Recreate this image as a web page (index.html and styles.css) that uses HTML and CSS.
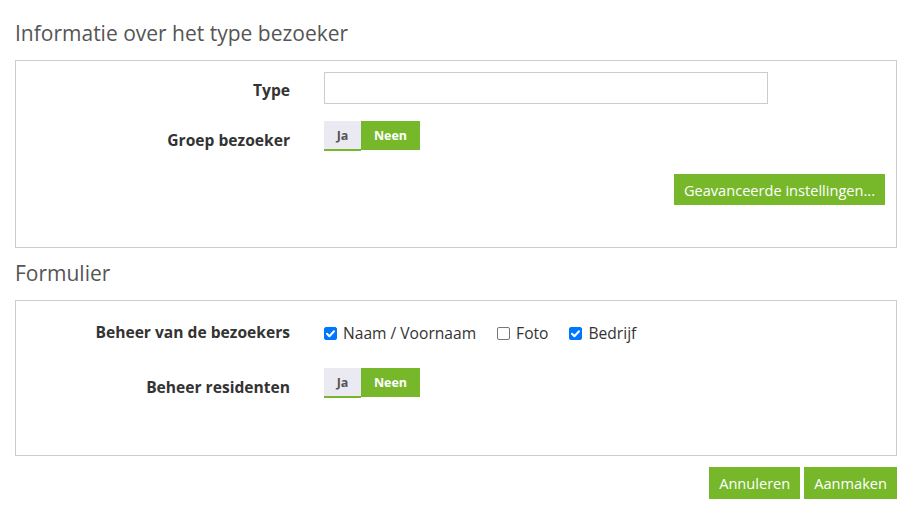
FILE: index.html
```html
<!DOCTYPE html>
<html>
<head>
<meta charset="utf-8">
<link rel="stylesheet" href="styles.css">
</head>
<body>
<div class="page">
  <h3 class="section-title">Informatie over het type bezoeker</h3>
  <div class="panel panel-info">
    <div class="row">
      <label class="label">Type</label>
      <div class="control"><input class="input" type="text"></div>
    </div>
    <div class="row">
      <label class="label label-toggle">Groep bezoeker</label>
      <div class="control">
        <div class="toggle"><span class="opt opt-off">Ja</span><span class="opt opt-on">Neen</span></div>
      </div>
    </div>
    <div class="actions-inner">
      <button class="btn">Geavanceerde instellingen...</button>
    </div>
  </div>

  <h3 class="section-title section-title-2">Formulier</h3>
  <div class="panel panel-form">
    <div class="row">
      <label class="label label-check">Beheer van de bezoekers</label>
      <div class="control checks">
        <label class="check"><span class="box checked"><svg viewBox="0 0 13 13" width="13" height="13"><path d="M3 6.8 L5.4 9.2 L10 4.2" fill="none" stroke="#fff" stroke-width="2" stroke-linecap="round" stroke-linejoin="round"/></svg></span>Naam / Voornaam</label>
        <label class="check"><span class="box"></span>Foto</label>
        <label class="check"><span class="box checked"><svg viewBox="0 0 13 13" width="13" height="13"><path d="M3 6.8 L5.4 9.2 L10 4.2" fill="none" stroke="#fff" stroke-width="2" stroke-linecap="round" stroke-linejoin="round"/></svg></span>Bedrijf</label>
      </div>
    </div>
    <div class="row row-res">
      <label class="label label-toggle">Beheer residenten</label>
      <div class="control">
        <div class="toggle"><span class="opt opt-off">Ja</span><span class="opt opt-on">Neen</span></div>
      </div>
    </div>
  </div>
  <div class="actions">
    <button class="btn btn-foot">Annuleren</button>
    <button class="btn btn-foot">Aanmaken</button>
  </div>
</div>
</body>
</html>
```
FILE: styles.css
```css
* { box-sizing: border-box; }
html, body { margin: 0; padding: 0; background: #fff; }
body {
  font-family: "Open Sans", "Liberation Sans", sans-serif;
  color: #333;
  font-size: 15px;
}
.page {
  padding: 18px 18px 0 15px;
}
.section-title {
  margin: 0;
  font-size: 21px;
  font-weight: 400;
  line-height: 30px;
  color: #555;
}
.section-title-2 {
  margin-top: 10px;
}
.panel {
  border: 1px solid #ccc;
  margin-top: 12px;
}
.panel-info {
  padding: 11px 11px 41px 0;
  height: 188px;
}
.panel-form {
  padding: 18px 11px 0 0;
  height: 156px;
}
.row {
  display: flex;
  align-items: flex-start;
  gap: 34px;
  margin-bottom: 17px;
}
.label {
  width: 274px;
  flex: none;
  text-align: right;
  font-weight: 700;
  font-size: 15.6px;
  line-height: 20px;
  color: #333;
  padding-top: 8px;
}
.label-toggle { padding-top: 9px; }
.label-check { padding-top: 3px; }
.control { flex: none; }
.input {
  display: block;
  width: 444px;
  height: 32px;
  border: 1px solid #ccc;
  border-radius: 0;
  padding: 4px 8px;
  font: inherit;
  outline: none;
}
.toggle {
  display: flex;
  height: 29px;
}
.opt {
  display: flex;
  align-items: center;
  justify-content: center;
  font-size: 12.5px;
  font-weight: 700;
}
.opt-off {
  width: 37px;
  background: #ebe9f1;
  color: #555;
  border-bottom: 2px solid #76b82a;
  height: 30px;
  margin-bottom: -1px;
}
.opt-on {
  width: 59px;
  background: #76b82a;
  color: #fff;
}
.actions-inner {
  display: flex;
  justify-content: flex-end;
  margin-top: 24px;
}
.btn {
  border: 0;
  background: #76b82a;
  color: #fff;
  font-family: "Open Sans", "Liberation Sans", sans-serif;
  font-size: 14.6px;
  height: 31px;
  padding: 0 10px;
  border-radius: 0;
  cursor: pointer;
}
.checks {
  display: flex;
  align-items: center;
  gap: 21px;
  padding-top: 4px;
}
.check {
  display: flex;
  align-items: center;
  gap: 6px;
  font-size: 15.6px;
  line-height: 20px;
  color: #333;
}
.box {
  width: 13px;
  height: 13px;
  border-radius: 2px;
  border: 1px solid #767676;
  background: #fff;
  display: inline-flex;
  flex: none;
}
.box.checked {
  background: #0075ff;
  border-color: #0075ff;
}
.box.checked svg { margin: -1px; }
.row-res { margin-top: 25px; }
.actions {
  display: flex;
  justify-content: flex-end;
  gap: 4px;
  margin-top: 11px;
}
.btn-foot {
  height: 32px;
  font-size: 14.6px;
  padding: 0 10px;
}
```
